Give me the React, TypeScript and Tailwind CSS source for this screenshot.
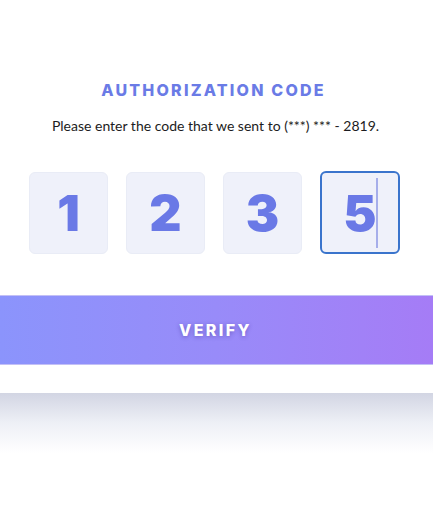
import React from "react";

export default function App() {
  const digits = ["1", "2", "3"];
  const heavy = { fontFamily: "Inter, 'Open Sans', sans-serif" };
  return (
    <div className="w-[433px] h-[512px] bg-white overflow-hidden" style={{ fontFamily: "Lato, 'Open Sans', sans-serif" }}>
      <div className="pt-[79px] flex flex-col items-center">
        <div className="text-[16px] leading-[22px] font-extrabold tracking-[2.2px] text-[#6a7be6] pr-[6px]" style={heavy}>
          AUTHORIZATION CODE
        </div>
        <div className="mt-[15px] text-[14px] leading-[20px] text-[#1c1c22] pr-[2px]">
          Please enter the code that we sent to (***) *** - 2819.
        </div>
        <div className="mt-[36px] flex gap-[18px] pr-[4px]">
          {digits.map((d) => (
            <div key={d} className="w-[79px] h-[82px] rounded-[6px] bg-[#eff1fa] border border-[#e9ecf6] flex items-center justify-center">
              <span className="text-[50px] font-black text-[#6a79e6] leading-none" style={heavy}>{d}</span>
            </div>
          ))}
          <div className="relative w-[80px] h-[83px] -mt-[1px] rounded-[6px] bg-[#eff1fa] border-2 border-[#3a74cc] flex items-center justify-center">
            <span className="text-[50px] font-black text-[#6a79e6] leading-none" style={heavy}>5</span>
            <div className="absolute left-[54px] top-[5px] w-[1.5px] h-[70px] bg-[#a6aeea]" />
          </div>
        </div>
      </div>
      <div className="mt-[41px] h-[70px] bg-gradient-to-r from-[#8b94fc] via-[#988bf9] to-[#a57cf6] border-y border-[#c3c0f6] flex items-center justify-center">
        <span className="text-[16px] font-extrabold tracking-[2.4px] text-white pr-[2px]" style={{ ...heavy, textShadow: "0 1px 4px rgba(60,40,140,0.45)" }}>
          VERIFY
        </span>
      </div>
      <div className="mt-[28px] h-[60px] bg-gradient-to-b from-[#d2d5e3] via-[#eef0f6] to-white" />
    </div>
  );
}
